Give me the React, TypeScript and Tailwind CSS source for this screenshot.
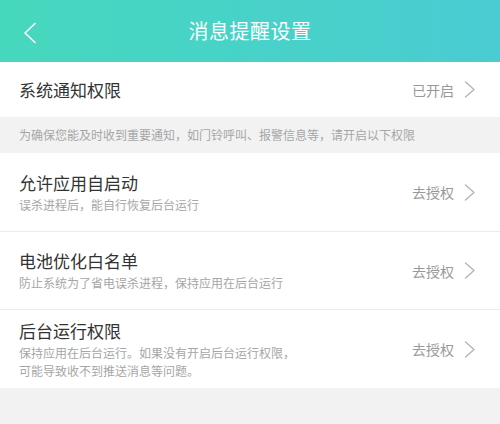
import React from 'react';

interface Permission {
  id: string;
  title: string;
  desc: string[];
}

const permissions: Permission[] = [
  { id: 'autostart', title: '允许应用自启动', desc: ['误杀进程后，能自行恢复后台运行'] },
  { id: 'battery', title: '电池优化白名单', desc: ['防止系统为了省电误杀进程，保持应用在后台运行'] },
  {
    id: 'background',
    title: '后台运行权限',
    desc: ['保持应用在后台运行。如果没有开启后台运行权限，', '可能导致收不到推送消息等问题。'],
  },
];

function Chevron() {
  return (
    <svg width="12" height="17" viewBox="0 0 12 17" fill="none" className="ml-[10px]">
      <path d="M1.5 1L10 8.5L1.5 16" stroke="#b5b5b5" strokeWidth="1.4" strokeLinecap="round" strokeLinejoin="round" />
    </svg>
  );
}

export default function App() {
  return (
    <div
      className="w-[500px] h-[424px] bg-[#f2f2f2] overflow-hidden"
      style={{ fontFamily: '"Noto Sans CJK SC", "Noto Sans", sans-serif' }}
    >
      {/* 顶部导航 */}
      <div className="h-[62px] bg-gradient-to-r from-[#46d8bd] to-[#4accd2] flex items-center relative">
        <button className="absolute left-[22px] top-[22px]">
          <svg width="16" height="22" viewBox="0 0 16 22" fill="none">
            <path d="M13 1.5L3 11L13 20.5" stroke="#ffffff" strokeWidth="1.6" strokeLinecap="round" strokeLinejoin="round" />
          </svg>
        </button>
        <h1 className="flex-1 text-center text-white text-[20px] leading-[28px] tracking-[0.5px]">消息提醒设置</h1>
      </div>

      {/* 系统通知 */}
      <div className="h-[55px] bg-white flex items-center pl-[19px] pr-[24px]">
        <span className="flex-1 text-[17px] text-[#333333] leading-[24px]">系统通知权限</span>
        <span className="text-[14px] text-[#999999] leading-[20px]">已开启</span>
        <Chevron />
      </div>

      <div className="h-[36px] flex items-center pl-[19px] text-[12px] text-[#a6a6a6] leading-[16px]">
        为确保您能及时收到重要通知，如门铃呼叫、报警信息等，请开启以下权限
      </div>

      {/* 权限列表 */}
      <div className="bg-white">
        {permissions.map((p, i) => (
          <div
            key={p.id}
            className={`${i === 0 ? 'h-[79px]' : 'h-[78px]'} flex items-center pl-[19px] pr-[24px] ${
              i < permissions.length - 1 ? 'border-b border-[#ebebeb]' : ''
            }`}
          >
            <div className="flex-1">
              <div className="text-[17px] text-[#333333] leading-[24px]">{p.title}</div>
              <div className="mt-[1px]">
                {p.desc.map((line) => (
                  <div key={line} className="text-[12px] text-[#a6a6a6] leading-[18px]">
                    {line}
                  </div>
                ))}
              </div>
            </div>
            <span className="text-[14px] text-[#999999] leading-[20px]">去授权</span>
            <Chevron />
          </div>
        ))}
      </div>
    </div>
  );
}
